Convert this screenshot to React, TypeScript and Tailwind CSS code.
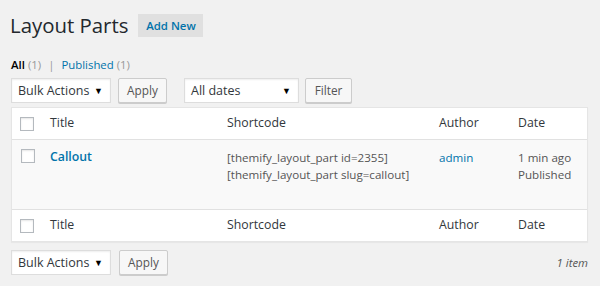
import React from "react";

const font = { fontFamily: '"Open Sans", "Noto Sans", sans-serif' };

function Select({ label, width }: { label: string; width: string }) {
  return (
    <div
      className={`${width} h-[25px] bg-white border border-[#dddddd] shadow-[inset_0_1px_2px_rgba(0,0,0,0.07)] flex items-center justify-between pl-[6px] pr-[7px] text-[12.5px] text-[#32373c] whitespace-nowrap`}
    >
      <span className="leading-none pt-[1px]">{label}</span>
      <span className="text-[9px] text-black leading-none">▼</span>
    </div>
  );
}

function Button({ label, width }: { label: string; width: string }) {
  return (
    <div
      className={`${width} h-[25px] bg-[#f7f7f7] border border-[#cccccc] rounded-[2px] shadow-[0_1px_0_#cccccc] flex items-center justify-center text-[11.8px] text-[#555555]`}
    >
      {label}
    </div>
  );
}

function Checkbox() {
  return <div className="w-[14px] h-[14px] bg-white border border-[#b4b9be] shadow-[inset_0_1px_2px_rgba(0,0,0,0.1)]" />;
}

function HeadRow({ top }: { top: boolean }) {
  return (
    <div
      className={`flex h-[32px] items-center bg-white text-[12.3px] text-[#32373c] ${
        top ? "border-b border-[#e1e1e1]" : "border-t border-[#e1e1e1]"
      }`}
    >
      <div className="w-[38px] pl-[8px] flex items-center">
        <Checkbox />
      </div>
      <div className="w-[177px]">Title</div>
      <div className="w-[212px]">Shortcode</div>
      <div className="w-[79px]">Author</div>
      <div className="flex-1">Date</div>
    </div>
  );
}

export default function App() {
  return (
    <div className="w-[600px] h-[286px] bg-[#f1f1f1] overflow-hidden" style={font}>
      <div className="pl-[11px] pr-[12px]">
        <div className="flex items-center pt-[14px] h-[37px]">
          <h1 className="text-[20.4px] leading-[23px] text-[#23282d] -ml-[1px] font-normal">Layout Parts</h1>
          <div className="ml-[10px] h-[23px] w-[65px] bg-[#e0e0e0] flex items-center justify-center text-[11.4px] font-semibold text-[#0073aa]">
            Add New
          </div>
        </div>
        <div className="mt-[20px] flex items-center text-[11.4px] leading-[15px] h-[15px]">
          <span className="font-semibold text-black">All</span>
          <span className="text-[#999] ml-[3px]">(1)</span>
          <span className="text-[#999] mx-[7px]">|</span>
          <span className="text-[#0073aa]">Published</span>
          <span className="text-[#999] ml-[3px]">(1)</span>
        </div>
        <div className="mt-[6px] flex items-center h-[25px]">
          <Select label="Bulk Actions" width="w-[100px]" />
          <div className="ml-[7px]">
            <Button label="Apply" width="w-[49px]" />
          </div>
          <div className="ml-[17px]">
            <Select label="All dates" width="w-[115px]" />
          </div>
          <div className="ml-[6px]">
            <Button label="Filter" width="w-[47px]" />
          </div>
        </div>
        <div className="mt-[4px] w-[577px] border border-[#e5e5e5] shadow-[0_1px_1px_rgba(0,0,0,0.04)] bg-white">
          <HeadRow top />
          <div className="flex h-[69px] bg-[#f9f9f9] text-[11.6px] text-[#555555] pt-[8px]">
            <div className="w-[38px] pl-[9px] pt-[1px]">
              <Checkbox />
            </div>
            <div className="w-[177px] text-[12.3px] font-semibold text-[#0073aa] leading-[18px]">Callout</div>
            <div className="w-[212px] leading-[17px] pt-[1px]">
              <div>[themify_layout_part id=2355]</div>
              <div>[themify_layout_part slug=callout]</div>
            </div>
            <div className="w-[79px] leading-[17px] pt-[1px] text-[#0073aa]">admin</div>
            <div className="flex-1 leading-[17px] pt-[1px]">
              <div>1 min ago</div>
              <div>Published</div>
            </div>
          </div>
          <HeadRow top={false} />
        </div>
        <div className="mt-[8px] flex items-center h-[25px] w-[577px]">
          <Select label="Bulk Actions" width="w-[100px]" />
          <div className="ml-[8px]">
            <Button label="Apply" width="w-[49px]" />
          </div>
          <div className="flex-1 text-right text-[11.4px] italic text-[#555555]">1 item</div>
        </div>
      </div>
    </div>
  );
}
